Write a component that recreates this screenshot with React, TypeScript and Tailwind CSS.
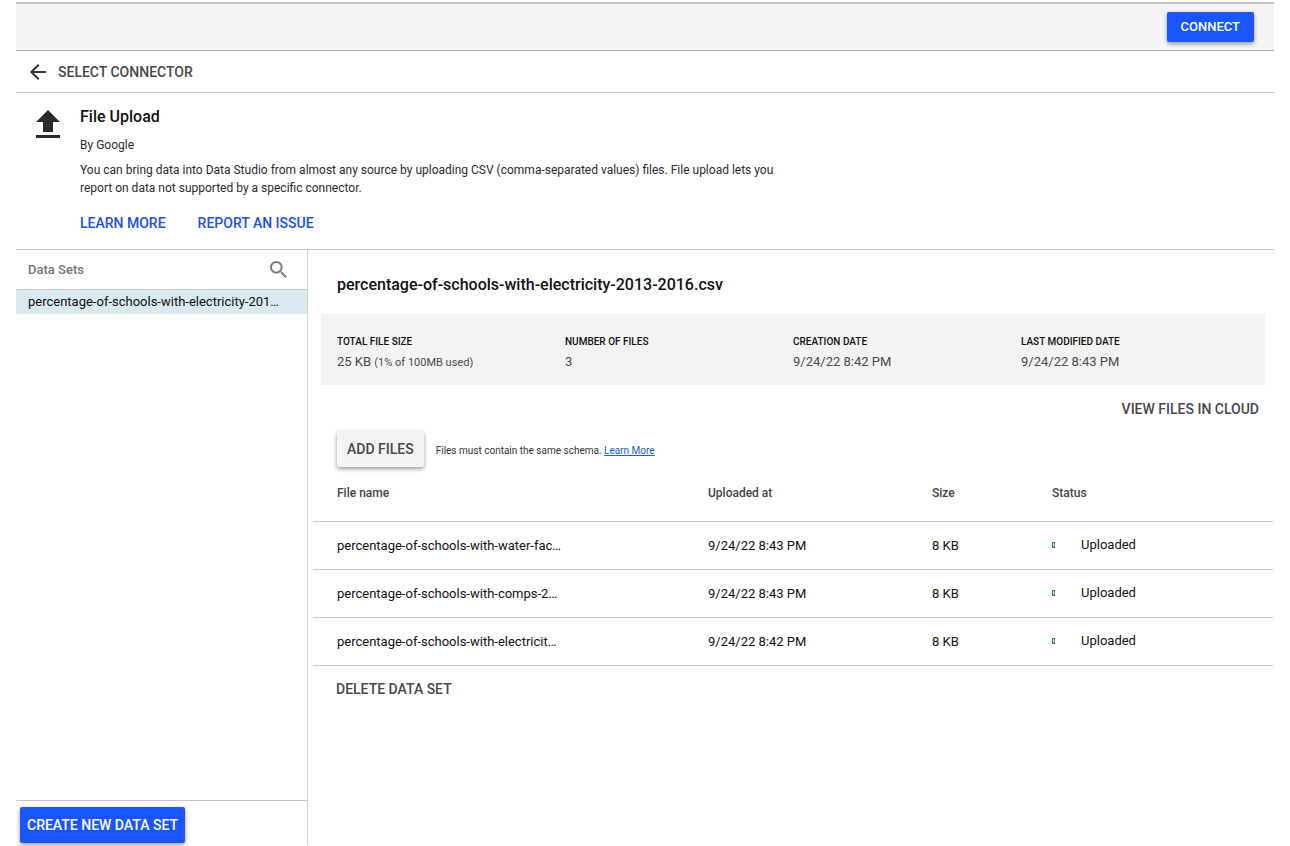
import React from 'react';

const stats = [
  { label: 'TOTAL FILE SIZE', value: '25 KB', note: '(1% of 100MB used)' },
  { label: 'NUMBER OF FILES', value: '3' },
  { label: 'CREATION DATE', value: '9/24/22 8:42 PM' },
  { label: 'LAST MODIFIED DATE', value: '9/24/22 8:43 PM' },
];

const files = [
  { name: 'percentage-of-schools-with-water-fac…', at: '9/24/22 8:43 PM', size: '8 KB' },
  { name: 'percentage-of-schools-with-comps-2…', at: '9/24/22 8:43 PM', size: '8 KB' },
  { name: 'percentage-of-schools-with-electricit…', at: '9/24/22 8:42 PM', size: '8 KB' },
];

const raised = 'shadow-[0_2px_4px_rgba(0,0,0,0.4)]';

function TopBar() {
  return (
    <header className="flex h-[49px] shrink-0 items-start justify-end border-t-2 border-b border-t-[#c4c4c4] border-b-[#a9a9a9] bg-[#f5f5f5] pt-2 pr-5">
      <button className={`h-[30px] rounded-xs bg-[#1a56ff] px-3.5 text-[13px] font-medium text-white ${raised}`}>
        CONNECT
      </button>
    </header>
  );
}

function ConnectorInfo() {
  return (
    <section className="flex shrink-0 border-b border-[#c6c6c6] pt-4 pb-4 pl-5">
      <svg viewBox="0 0 24 28" className="mt-px h-7 w-6 shrink-0 fill-[#2b2b2b]" aria-hidden="true">
        <path d="M12 0 24 12H17V22H7V12H0zM0 25h24v3H0z" />
      </svg>
      <div className="ml-5 max-w-[700px]">
        <h1 className="text-base leading-4 font-medium text-[#111]">File Upload</h1>
        <p className="mt-3 text-xs leading-4 text-[#2b2b2b]">By Google</p>
        <p className="mt-2 text-xs leading-[18px] text-[#2b2b2b]">
          You can bring data into Data Studio from almost any source by uploading CSV (comma-separated values) files. File upload lets you report on data not supported by a specific connector.
        </p>
        <div className="mt-4 flex gap-8 text-sm leading-5 font-medium text-[#1a4ff0]">
          <a href="#learn">LEARN MORE</a>
          <a href="#issue">REPORT AN ISSUE</a>
        </div>
      </div>
    </section>
  );
}

function Sidebar() {
  return (
    <aside className="flex w-[292px] shrink-0 flex-col border-r border-[#d2d2d2]">
      <div className="flex h-10 items-center justify-between border-b border-[#c6c6c6] pr-5 pl-3">
        <h2 className="text-[13px] font-medium text-[#757575]">Data Sets</h2>
        <button aria-label="Search data sets">
          <svg viewBox="3 3 17.5 17.5" className="size-[17px] fill-[#7d7d7d]">
            <path d="M15.5 14h-.79l-.28-.27A6.471 6.471 0 0 0 16 9.5 6.5 6.5 0 1 0 9.5 16c1.61 0 3.09-.59 4.23-1.57l.27.28v.79l5 4.99L20.49 19l-4.99-5zm-6 0C7.01 14 5 11.99 5 9.5S7.01 5 9.5 5 14 7.01 14 9.5 11.99 14 9.5 14z" />
          </svg>
        </button>
      </div>
      <a href="#dataset" className="h-6 truncate bg-[#d8e9f0] pl-3 text-[13px] leading-6 text-[#111]">
        percentage-of-schools-with-electricity-201…
      </a>
      <div className="mt-auto border-t border-[#c6c6c6] px-1 pt-1.5 pb-0.5">
        <button className={`h-9 rounded-xs bg-[#1a56ff] px-[7px] text-sm font-medium text-white ${raised}`}>
          CREATE NEW DATA SET
        </button>
      </div>
    </aside>
  );
}

function StatusIcon() {
  return (
    <svg viewBox="0 0 3 6" className="h-1.5 w-[3px]" shapeRendering="crispEdges" aria-hidden="true">
      <path fill="#2f7f60" d="M0 0h3v6H0z" />
      <path fill="#b9d6e4" d="M1 1h1v4H1z" />
      <path fill="#6fa3a0" d="M2 2h1v2H2z" />
    </svg>
  );
}

function FileTable() {
  return (
    <table className="w-full table-fixed border-collapse text-left">
      <colgroup>
        <col />
        <col className="w-56" />
        <col className="w-[120px]" />
        <col className="w-[221px]" />
      </colgroup>
      <thead>
        <tr className="h-[54px] border-b border-[#c6c6c6] align-top text-xs leading-4 text-[#444]">
          <th className="pt-[18px] pl-6 font-medium">File name</th>
          <th className="pt-[18px] font-medium">Uploaded at</th>
          <th className="pt-[18px] font-medium">Size</th>
          <th className="pt-[18px] font-medium">Status</th>
        </tr>
      </thead>
      <tbody className="text-[13px] leading-4 text-[#111]">
        {files.map((f) => (
          <tr key={f.name} className="h-12 border-b border-[#c6c6c6]">
            <td className="pt-0.5 pl-6">{f.name}</td>
            <td className="pt-0.5">{f.at}</td>
            <td className="pt-0.5">{f.size}</td>
            <td>
              <div className="flex items-center gap-[26px]">
                <StatusIcon />
                <span>Uploaded</span>
              </div>
            </td>
          </tr>
        ))}
      </tbody>
    </table>
  );
}

export default function App() {
  return (
    <div className="flex min-h-screen flex-col bg-white px-4 pt-0.5 pb-px font-['Roboto',sans-serif]">
      <TopBar />
      <nav className="flex h-[42px] shrink-0 items-center border-b border-[#c6c6c6] pl-3.5">
        <a href="#connectors" className="flex items-center gap-3 text-sm font-medium text-[#484848]">
          <svg viewBox="4 4 16 16" className="size-4 fill-[#333]" aria-hidden="true">
            <path d="M20 11H7.83l5.59-5.59L12 4l-8 8 8 8 1.41-1.41L7.83 13H20z" />
          </svg>
          SELECT CONNECTOR
        </a>
      </nav>
      <ConnectorInfo />
      <div className="flex grow">
        <Sidebar />
        <main className="min-w-0 grow pr-px pl-[5px]">
          <h2 className="pt-[25px] pl-6 text-base leading-5 font-medium text-[#111]">
            percentage-of-schools-with-electricity-2013-2016.csv
          </h2>
          <dl className="mt-[19px] mr-2 ml-2 grid grid-cols-4 bg-[#f3f3f3] px-4 pt-5 pb-2.5">
            {stats.map((s) => (
              <div key={s.label}>
                <dt className="text-[10px] leading-4 font-medium text-[#111]">{s.label}</dt>
                <dd className="text-[13px] leading-6 text-[#4a4a4a]">
                  {s.value} {s.note && <span className="text-[11px]">{s.note}</span>}
                </dd>
              </div>
            ))}
          </dl>
          <div className="mt-[14px] mr-3.5 flex justify-end">
            <button className="text-sm leading-5 font-medium text-[#484848]">VIEW FILES IN CLOUD</button>
          </div>
          <div className="mt-3 flex items-center gap-3 pl-6">
            <button className={`h-9 rounded-xs bg-[#f2f3f4] px-2.5 text-sm font-medium text-[#484848] ${raised}`}>ADD FILES</button>
            <p className="pt-1 text-[10px] leading-4 text-[#333]">
              Files must contain the same schema.{' '}
              <a href="#schema" className="text-[#1a5cd8] underline">Learn More</a>
            </p>
          </div>
          <FileTable />
          <button className="mt-[13px] ml-[23px] text-sm leading-5 font-medium text-[#484848]">DELETE DATA SET</button>
        </main>
      </div>
    </div>
  );
}
